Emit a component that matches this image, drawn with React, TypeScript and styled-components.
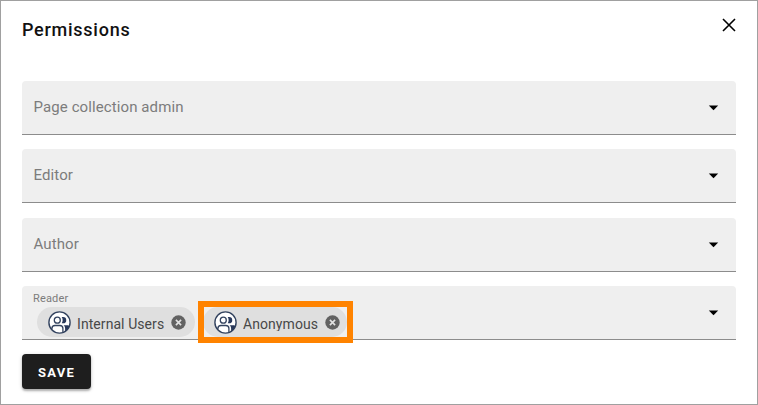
import React from "react";
import styled, { createGlobalStyle } from "styled-components";

const GlobalStyle = createGlobalStyle`
  *, *::before, *::after { box-sizing: border-box; }
  body { margin: 0; background: #fff; font-family: Roboto, sans-serif; }
`;

const Dialog = styled.main`
  width: 758px;
  height: 405px;
  padding: 0 21px;
  border: 1px solid #a0a0a0;
  background: #fff;
  overflow: hidden;
`;

const Header = styled.header`
  display: flex;
  justify-content: space-between;
  align-items: flex-start;
  height: 80px;
`;

const Title = styled.h1`
  margin: 17px 0 0;
  font-size: 18px;
  line-height: 24px;
  font-weight: 500;
  letter-spacing: 0.74px;
  color: #111;
`;

const CloseButton = styled.button`
  display: flex;
  margin-top: 17px;
  padding: 0;
  border: 0;
  background: none;
  color: #000;
`;

const Fields = styled.div`
  display: grid;
  grid-template-rows: repeat(4, 54px);
  row-gap: 14.333px;
`;

const Field = styled.div`
  display: flex;
  justify-content: space-between;
  align-items: center;
  padding: 0 17px 0 11px;
  border-bottom: 1px solid #8c8c8c;
  border-radius: 4px 4px 0 0;
  background: #efefef;
`;

const FieldLabel = styled.span`
  font-size: 15px;
  line-height: 20px;
  letter-spacing: 0.1px;
  color: #7c7c7c;
  padding: 0 0 1px 0.5px;
`;

const FilledContent = styled.div`
  align-self: stretch;
  padding-top: 6px;
`;

const FloatingLabel = styled.div`
  height: 12px;
  font-size: 11px;
  line-height: 13px;
  letter-spacing: 0.15px;
  color: #7c7c7c;
`;

const Chips = styled.div`
  display: flex;
  gap: 8px;
  margin: 3px 0 0 4px;
`;

const Chip = styled.span<{ $width: number; $endPadding: number }>`
  position: relative;
  display: flex;
  align-items: center;
  width: ${(p) => p.$width}px;
  height: 30px;
  padding: 1px ${(p) => p.$endPadding}px 0 11px;
  border-radius: 15px;
  background: #dfdfdf;
`;

const ChipText = styled.span`
  flex: 1;
  height: 17px;
  margin: 1px 0 0 6px;
  overflow: hidden;
  white-space: nowrap;
  font-size: 14px;
  line-height: 20px;
  letter-spacing: 0.07px;
  color: #484848;
`;

const Highlight = styled.span`
  position: absolute;
  inset: -6px -6px -6px -5px;
  border: 6px solid #ff8300;
`;

const SaveButton = styled.button`
  display: block;
  width: 69px;
  height: 35px;
  margin-top: 14px;
  padding: 3px 0 0;
  border: 0;
  border-radius: 4px;
  background: #1e1e1e;
  box-shadow: 0 2px 2px rgba(0, 0, 0, 0.24), 0 1px 4px rgba(0, 0, 0, 0.16);
  font: 700 13px/18px Roboto, sans-serif;
  letter-spacing: 1.3px;
  color: #fff;
`;

const CaretIcon = styled.svg`
  margin-top: 1px;
`;

const CloseIcon = () => (
  <svg width="14" height="14" viewBox="0 0 14 14">
    <path d="M1 1 13 13M13 1 1 13" stroke="currentColor" strokeWidth="1.6" />
  </svg>
);

const Caret = () => (
  <CaretIcon width="11" height="6" viewBox="0 0 11 6">
    <path d="M.8.5h9.4L5.5 5.2Z" fill="#000" />
  </CaretIcon>
);

const GroupIcon = () => (
  <svg width="23" height="23" viewBox="0 0 23 23">
    <circle cx="11.5" cy="11.5" r="10.6" fill="#fff" stroke="#33435f" strokeWidth="1.4" />
    <g fill="none" stroke="#33435f" strokeWidth="1.3">
      <circle cx="9.3" cy="9.2" r="3" />
      <path d="M3.9 18.8v-1.2c0-1.9 1.3-3.1 3.1-3.1h4.8c1.9 0 3.1 1.2 3.1 3.1v3.8" />
    </g>
    <path d="M13.7 6h1.4a3.1 3.1 0 0 1 0 6.3h-1.4c1.3-1.8 1.3-4.5 0-6.3Z" fill="#29395b" />
    <path d="M15.5 14.3h4c1 0 1.6.5 1.6 1.2-.8 2-2.2 3.7-4 4.8v-2.8c0-1.4-.6-2.5-1.6-3.2Z" fill="#29395b" />
  </svg>
);

const RemoveButton = styled.button`
  display: flex;
  padding: 0;
  border: 0;
  background: none;
`;

const RemoveIcon = () => (
  <svg width="15" height="15" viewBox="0 0 15 15">
    <circle cx="7.5" cy="7.5" r="7.2" fill="#626262" />
    <path d="m4.9 4.9 5.2 5.2m0-5.2-5.2 5.2" stroke="#e2e2e2" strokeWidth="1.6" />
  </svg>
);

const readers = [
  { name: "Internal Users", width: 158, endPadding: 9, highlighted: false },
  { name: "Anonymous", width: 144, endPadding: 7, highlighted: true },
];

export default function App() {
  return (
    <>
      <GlobalStyle />
      <Dialog>
        <Header>
          <Title>Permissions</Title>
          <CloseButton aria-label="Close"><CloseIcon /></CloseButton>
        </Header>
        <Fields>
          {["Page collection admin", "Editor", "Author"].map((label) => (
            <Field key={label}>
              <FieldLabel>{label}</FieldLabel>
              <Caret />
            </Field>
          ))}
          <Field>
            <FilledContent>
              <FloatingLabel>Reader</FloatingLabel>
              <Chips>
                {readers.map((r) => (
                  <Chip key={r.name} $width={r.width} $endPadding={r.endPadding}>
                    <GroupIcon />
                    <ChipText>{r.name}</ChipText>
                    <RemoveButton aria-label={`Remove ${r.name}`}><RemoveIcon /></RemoveButton>
                    {r.highlighted && <Highlight />}
                  </Chip>
                ))}
              </Chips>
            </FilledContent>
            <Caret />
          </Field>
        </Fields>
        <SaveButton>SAVE</SaveButton>
      </Dialog>
    </>
  );
}
